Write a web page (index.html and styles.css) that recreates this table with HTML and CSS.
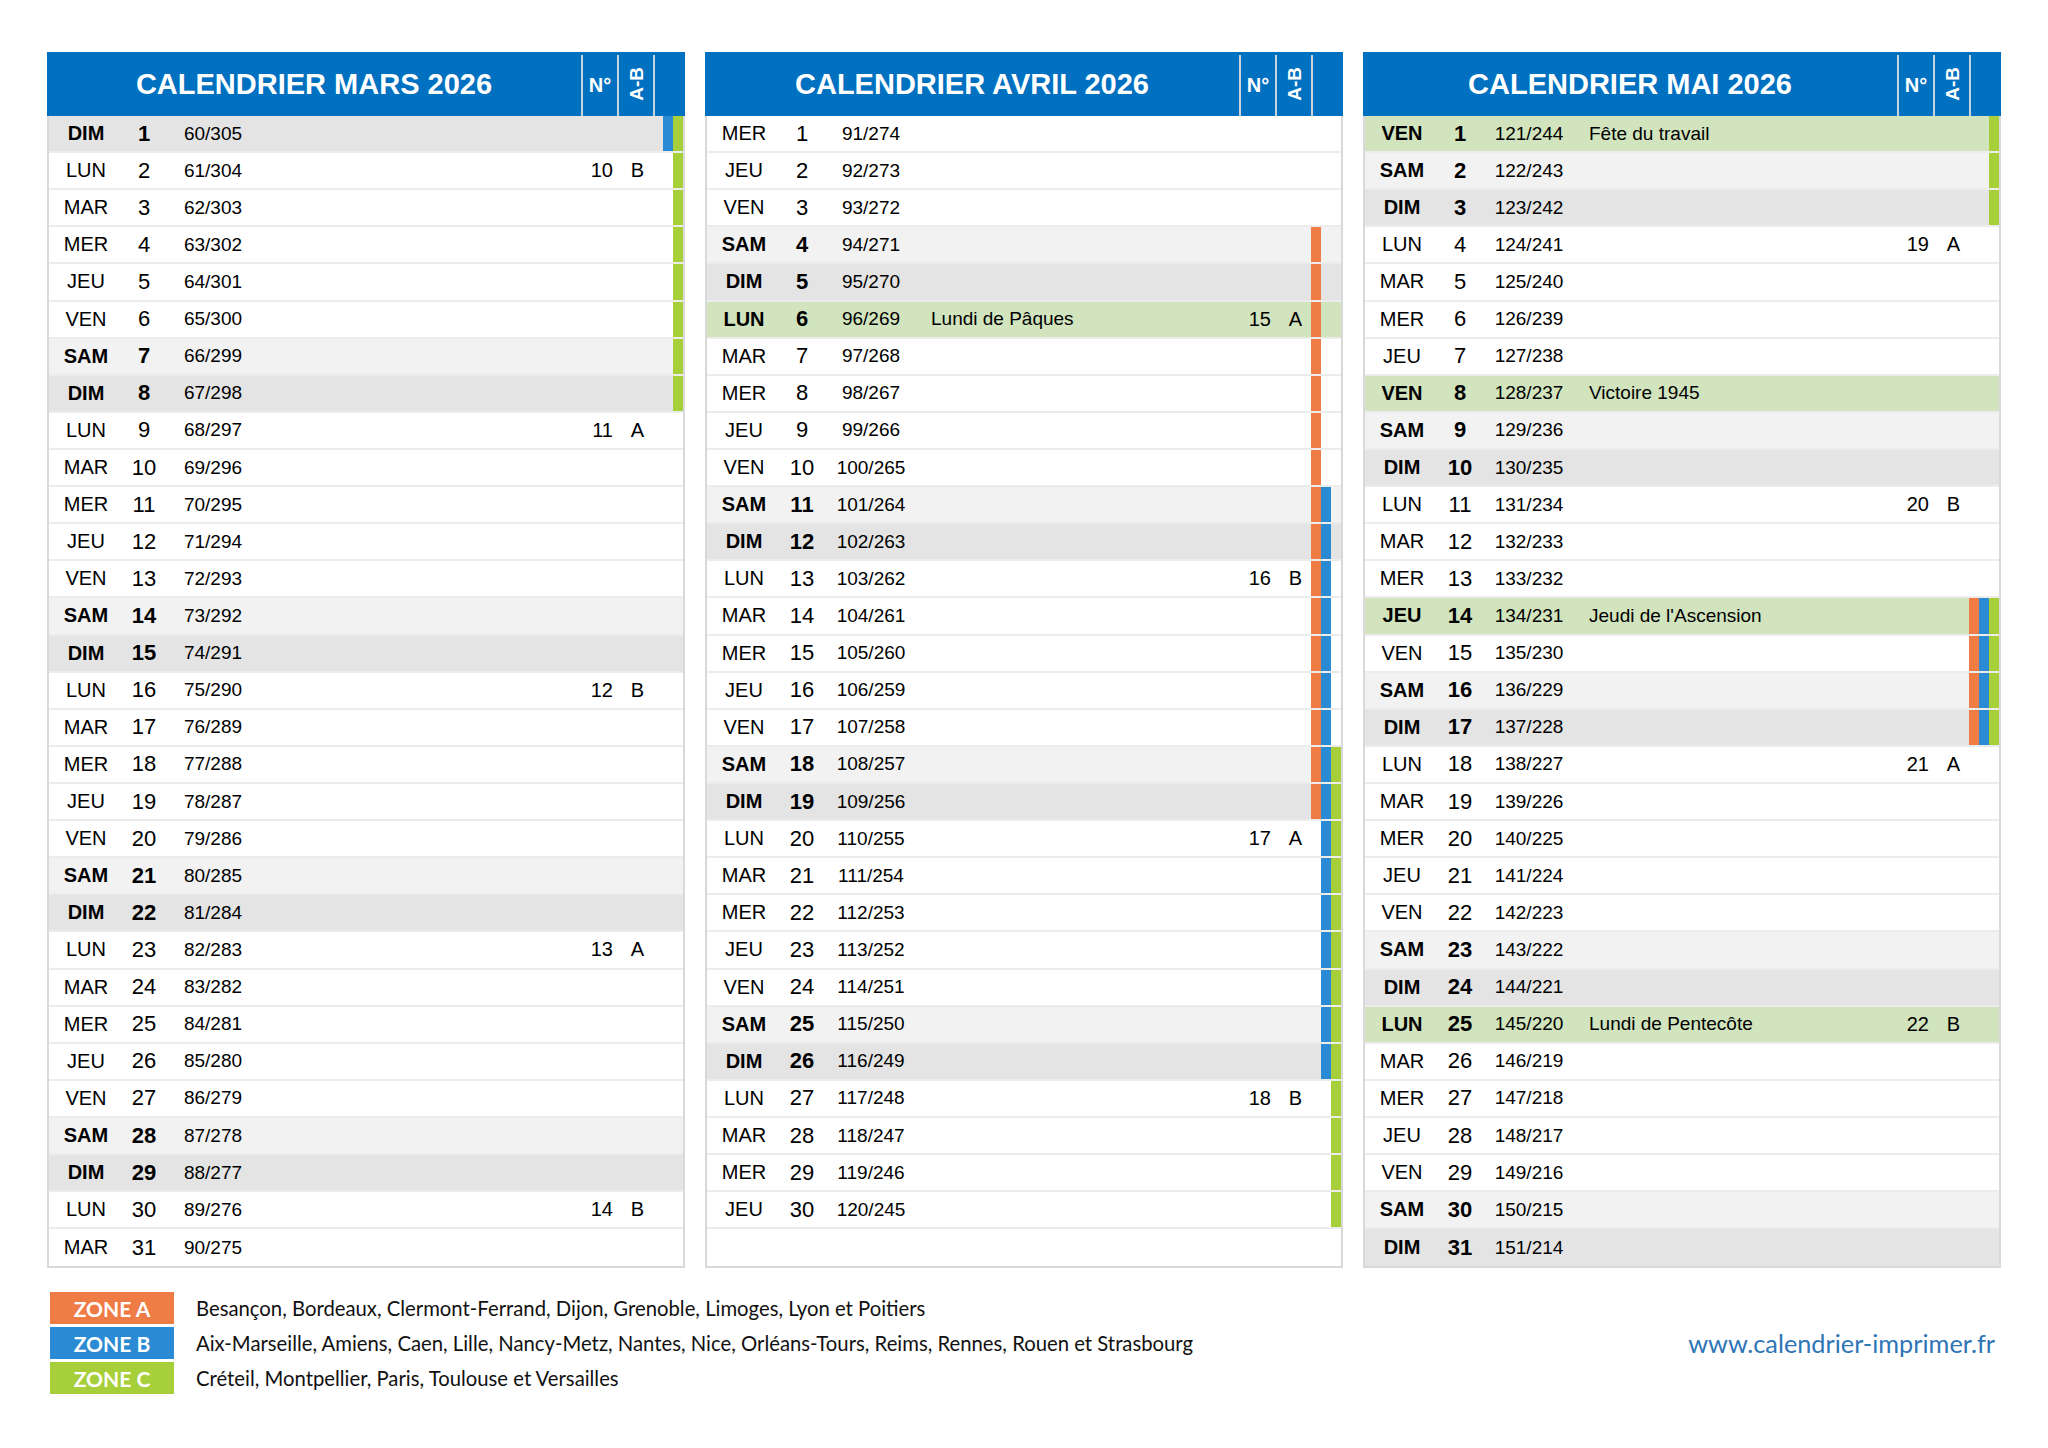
FILE: index.html
```html
<!DOCTYPE html>
<html lang="fr">
<head>
<meta charset="utf-8">
<title>Calendrier Mars Avril Mai 2026</title>
<link rel="stylesheet" href="styles.css">
</head>
<body>
<div class="months">
  <section class="month">
    <div class="head">
      <div class="title">CALENDRIER MARS 2026</div>
      <div class="hc">N°</div>
      <div class="hc"><span class="vert">A-B</span></div>
      <div class="hc"></div>
    </div>
    <div class="body">
      <div class="row sun"><span class="dn">DIM</span><span class="d">1</span><span class="doy">60/305</span><span class="z"><i class="b"></i><i class="c"></i></span></div>
      <div class="row"><span class="dn">LUN</span><span class="d">2</span><span class="doy">61/304</span><span class="wk">10</span><span class="ab">B</span><span class="z"><i class="c"></i></span></div>
      <div class="row"><span class="dn">MAR</span><span class="d">3</span><span class="doy">62/303</span><span class="z"><i class="c"></i></span></div>
      <div class="row"><span class="dn">MER</span><span class="d">4</span><span class="doy">63/302</span><span class="z"><i class="c"></i></span></div>
      <div class="row"><span class="dn">JEU</span><span class="d">5</span><span class="doy">64/301</span><span class="z"><i class="c"></i></span></div>
      <div class="row"><span class="dn">VEN</span><span class="d">6</span><span class="doy">65/300</span><span class="z"><i class="c"></i></span></div>
      <div class="row sat"><span class="dn">SAM</span><span class="d">7</span><span class="doy">66/299</span><span class="z"><i class="c"></i></span></div>
      <div class="row sun"><span class="dn">DIM</span><span class="d">8</span><span class="doy">67/298</span><span class="z"><i class="c"></i></span></div>
      <div class="row"><span class="dn">LUN</span><span class="d">9</span><span class="doy">68/297</span><span class="wk">11</span><span class="ab">A</span></div>
      <div class="row"><span class="dn">MAR</span><span class="d">10</span><span class="doy">69/296</span></div>
      <div class="row"><span class="dn">MER</span><span class="d">11</span><span class="doy">70/295</span></div>
      <div class="row"><span class="dn">JEU</span><span class="d">12</span><span class="doy">71/294</span></div>
      <div class="row"><span class="dn">VEN</span><span class="d">13</span><span class="doy">72/293</span></div>
      <div class="row sat"><span class="dn">SAM</span><span class="d">14</span><span class="doy">73/292</span></div>
      <div class="row sun"><span class="dn">DIM</span><span class="d">15</span><span class="doy">74/291</span></div>
      <div class="row"><span class="dn">LUN</span><span class="d">16</span><span class="doy">75/290</span><span class="wk">12</span><span class="ab">B</span></div>
      <div class="row"><span class="dn">MAR</span><span class="d">17</span><span class="doy">76/289</span></div>
      <div class="row"><span class="dn">MER</span><span class="d">18</span><span class="doy">77/288</span></div>
      <div class="row"><span class="dn">JEU</span><span class="d">19</span><span class="doy">78/287</span></div>
      <div class="row"><span class="dn">VEN</span><span class="d">20</span><span class="doy">79/286</span></div>
      <div class="row sat"><span class="dn">SAM</span><span class="d">21</span><span class="doy">80/285</span></div>
      <div class="row sun"><span class="dn">DIM</span><span class="d">22</span><span class="doy">81/284</span></div>
      <div class="row"><span class="dn">LUN</span><span class="d">23</span><span class="doy">82/283</span><span class="wk">13</span><span class="ab">A</span></div>
      <div class="row"><span class="dn">MAR</span><span class="d">24</span><span class="doy">83/282</span></div>
      <div class="row"><span class="dn">MER</span><span class="d">25</span><span class="doy">84/281</span></div>
      <div class="row"><span class="dn">JEU</span><span class="d">26</span><span class="doy">85/280</span></div>
      <div class="row"><span class="dn">VEN</span><span class="d">27</span><span class="doy">86/279</span></div>
      <div class="row sat"><span class="dn">SAM</span><span class="d">28</span><span class="doy">87/278</span></div>
      <div class="row sun"><span class="dn">DIM</span><span class="d">29</span><span class="doy">88/277</span></div>
      <div class="row"><span class="dn">LUN</span><span class="d">30</span><span class="doy">89/276</span><span class="wk">14</span><span class="ab">B</span></div>
      <div class="row"><span class="dn">MAR</span><span class="d">31</span><span class="doy">90/275</span></div>
    </div>
  </section>

  <section class="month">
    <div class="head">
      <div class="title">CALENDRIER AVRIL 2026</div>
      <div class="hc">N°</div>
      <div class="hc"><span class="vert">A-B</span></div>
      <div class="hc"></div>
    </div>
    <div class="body">
      <div class="row"><span class="dn">MER</span><span class="d">1</span><span class="doy">91/274</span></div>
      <div class="row"><span class="dn">JEU</span><span class="d">2</span><span class="doy">92/273</span></div>
      <div class="row"><span class="dn">VEN</span><span class="d">3</span><span class="doy">93/272</span></div>
      <div class="row sat"><span class="dn">SAM</span><span class="d">4</span><span class="doy">94/271</span><span class="z"><i class="a"></i></span></div>
      <div class="row sun"><span class="dn">DIM</span><span class="d">5</span><span class="doy">95/270</span><span class="z"><i class="a"></i></span></div>
      <div class="row hol"><span class="dn">LUN</span><span class="d">6</span><span class="doy">96/269</span><span class="ev">Lundi de Pâques</span><span class="wk">15</span><span class="ab">A</span><span class="z"><i class="a"></i></span></div>
      <div class="row"><span class="dn">MAR</span><span class="d">7</span><span class="doy">97/268</span><span class="z"><i class="a"></i></span></div>
      <div class="row"><span class="dn">MER</span><span class="d">8</span><span class="doy">98/267</span><span class="z"><i class="a"></i></span></div>
      <div class="row"><span class="dn">JEU</span><span class="d">9</span><span class="doy">99/266</span><span class="z"><i class="a"></i></span></div>
      <div class="row"><span class="dn">VEN</span><span class="d">10</span><span class="doy">100/265</span><span class="z"><i class="a"></i></span></div>
      <div class="row sat"><span class="dn">SAM</span><span class="d">11</span><span class="doy">101/264</span><span class="z"><i class="a"></i><i class="b"></i></span></div>
      <div class="row sun"><span class="dn">DIM</span><span class="d">12</span><span class="doy">102/263</span><span class="z"><i class="a"></i><i class="b"></i></span></div>
      <div class="row"><span class="dn">LUN</span><span class="d">13</span><span class="doy">103/262</span><span class="wk">16</span><span class="ab">B</span><span class="z"><i class="a"></i><i class="b"></i></span></div>
      <div class="row"><span class="dn">MAR</span><span class="d">14</span><span class="doy">104/261</span><span class="z"><i class="a"></i><i class="b"></i></span></div>
      <div class="row"><span class="dn">MER</span><span class="d">15</span><span class="doy">105/260</span><span class="z"><i class="a"></i><i class="b"></i></span></div>
      <div class="row"><span class="dn">JEU</span><span class="d">16</span><span class="doy">106/259</span><span class="z"><i class="a"></i><i class="b"></i></span></div>
      <div class="row"><span class="dn">VEN</span><span class="d">17</span><span class="doy">107/258</span><span class="z"><i class="a"></i><i class="b"></i></span></div>
      <div class="row sat"><span class="dn">SAM</span><span class="d">18</span><span class="doy">108/257</span><span class="z"><i class="a"></i><i class="b"></i><i class="c"></i></span></div>
      <div class="row sun"><span class="dn">DIM</span><span class="d">19</span><span class="doy">109/256</span><span class="z"><i class="a"></i><i class="b"></i><i class="c"></i></span></div>
      <div class="row"><span class="dn">LUN</span><span class="d">20</span><span class="doy">110/255</span><span class="wk">17</span><span class="ab">A</span><span class="z"><i class="b"></i><i class="c"></i></span></div>
      <div class="row"><span class="dn">MAR</span><span class="d">21</span><span class="doy">111/254</span><span class="z"><i class="b"></i><i class="c"></i></span></div>
      <div class="row"><span class="dn">MER</span><span class="d">22</span><span class="doy">112/253</span><span class="z"><i class="b"></i><i class="c"></i></span></div>
      <div class="row"><span class="dn">JEU</span><span class="d">23</span><span class="doy">113/252</span><span class="z"><i class="b"></i><i class="c"></i></span></div>
      <div class="row"><span class="dn">VEN</span><span class="d">24</span><span class="doy">114/251</span><span class="z"><i class="b"></i><i class="c"></i></span></div>
      <div class="row sat"><span class="dn">SAM</span><span class="d">25</span><span class="doy">115/250</span><span class="z"><i class="b"></i><i class="c"></i></span></div>
      <div class="row sun"><span class="dn">DIM</span><span class="d">26</span><span class="doy">116/249</span><span class="z"><i class="b"></i><i class="c"></i></span></div>
      <div class="row"><span class="dn">LUN</span><span class="d">27</span><span class="doy">117/248</span><span class="wk">18</span><span class="ab">B</span><span class="z"><i class="c"></i></span></div>
      <div class="row"><span class="dn">MAR</span><span class="d">28</span><span class="doy">118/247</span><span class="z"><i class="c"></i></span></div>
      <div class="row"><span class="dn">MER</span><span class="d">29</span><span class="doy">119/246</span><span class="z"><i class="c"></i></span></div>
      <div class="row"><span class="dn">JEU</span><span class="d">30</span><span class="doy">120/245</span><span class="z"><i class="c"></i></span></div>
      <div class="row empty"></div>
    </div>
  </section>

  <section class="month">
    <div class="head">
      <div class="title">CALENDRIER MAI 2026</div>
      <div class="hc">N°</div>
      <div class="hc"><span class="vert">A-B</span></div>
      <div class="hc"></div>
    </div>
    <div class="body">
      <div class="row hol"><span class="dn">VEN</span><span class="d">1</span><span class="doy">121/244</span><span class="ev">Fête du travail</span><span class="z"><i class="c"></i></span></div>
      <div class="row sat"><span class="dn">SAM</span><span class="d">2</span><span class="doy">122/243</span><span class="z"><i class="c"></i></span></div>
      <div class="row sun"><span class="dn">DIM</span><span class="d">3</span><span class="doy">123/242</span><span class="z"><i class="c"></i></span></div>
      <div class="row"><span class="dn">LUN</span><span class="d">4</span><span class="doy">124/241</span><span class="wk">19</span><span class="ab">A</span></div>
      <div class="row"><span class="dn">MAR</span><span class="d">5</span><span class="doy">125/240</span></div>
      <div class="row"><span class="dn">MER</span><span class="d">6</span><span class="doy">126/239</span></div>
      <div class="row"><span class="dn">JEU</span><span class="d">7</span><span class="doy">127/238</span></div>
      <div class="row hol"><span class="dn">VEN</span><span class="d">8</span><span class="doy">128/237</span><span class="ev">Victoire 1945</span></div>
      <div class="row sat"><span class="dn">SAM</span><span class="d">9</span><span class="doy">129/236</span></div>
      <div class="row sun"><span class="dn">DIM</span><span class="d">10</span><span class="doy">130/235</span></div>
      <div class="row"><span class="dn">LUN</span><span class="d">11</span><span class="doy">131/234</span><span class="wk">20</span><span class="ab">B</span></div>
      <div class="row"><span class="dn">MAR</span><span class="d">12</span><span class="doy">132/233</span></div>
      <div class="row"><span class="dn">MER</span><span class="d">13</span><span class="doy">133/232</span></div>
      <div class="row hol"><span class="dn">JEU</span><span class="d">14</span><span class="doy">134/231</span><span class="ev">Jeudi de l'Ascension</span><span class="z"><i class="a"></i><i class="b"></i><i class="c"></i></span></div>
      <div class="row"><span class="dn">VEN</span><span class="d">15</span><span class="doy">135/230</span><span class="z"><i class="a"></i><i class="b"></i><i class="c"></i></span></div>
      <div class="row sat"><span class="dn">SAM</span><span class="d">16</span><span class="doy">136/229</span><span class="z"><i class="a"></i><i class="b"></i><i class="c"></i></span></div>
      <div class="row sun"><span class="dn">DIM</span><span class="d">17</span><span class="doy">137/228</span><span class="z"><i class="a"></i><i class="b"></i><i class="c"></i></span></div>
      <div class="row"><span class="dn">LUN</span><span class="d">18</span><span class="doy">138/227</span><span class="wk">21</span><span class="ab">A</span></div>
      <div class="row"><span class="dn">MAR</span><span class="d">19</span><span class="doy">139/226</span></div>
      <div class="row"><span class="dn">MER</span><span class="d">20</span><span class="doy">140/225</span></div>
      <div class="row"><span class="dn">JEU</span><span class="d">21</span><span class="doy">141/224</span></div>
      <div class="row"><span class="dn">VEN</span><span class="d">22</span><span class="doy">142/223</span></div>
      <div class="row sat"><span class="dn">SAM</span><span class="d">23</span><span class="doy">143/222</span></div>
      <div class="row sun"><span class="dn">DIM</span><span class="d">24</span><span class="doy">144/221</span></div>
      <div class="row hol"><span class="dn">LUN</span><span class="d">25</span><span class="doy">145/220</span><span class="ev">Lundi de Pentecôte</span><span class="wk">22</span><span class="ab">B</span></div>
      <div class="row"><span class="dn">MAR</span><span class="d">26</span><span class="doy">146/219</span></div>
      <div class="row"><span class="dn">MER</span><span class="d">27</span><span class="doy">147/218</span></div>
      <div class="row"><span class="dn">JEU</span><span class="d">28</span><span class="doy">148/217</span></div>
      <div class="row"><span class="dn">VEN</span><span class="d">29</span><span class="doy">149/216</span></div>
      <div class="row sat"><span class="dn">SAM</span><span class="d">30</span><span class="doy">150/215</span></div>
      <div class="row sun"><span class="dn">DIM</span><span class="d">31</span><span class="doy">151/214</span></div>
    </div>
  </section>
</div>

<footer class="footer">
  <div class="zones">
    <div class="zrow"><span class="zbox za">ZONE A</span><span class="ztext">Besançon, Bordeaux, Clermont-Ferrand, Dijon, Grenoble, Limoges, Lyon et Poitiers</span></div>
    <div class="zrow"><span class="zbox zb">ZONE B</span><span class="ztext">Aix-Marseille, Amiens, Caen, Lille, Nancy-Metz, Nantes, Nice, Orléans-Tours, Reims, Rennes, Rouen et Strasbourg</span></div>
    <div class="zrow"><span class="zbox zc">ZONE C</span><span class="ztext">Créteil, Montpellier, Paris, Toulouse et Versailles</span></div>
  </div>
  <div class="url">www.calendrier-imprimer.fr</div>
</footer>
</body>
</html>
```

FILE: styles.css
```css
html, body {
  margin: 0;
  background: #ffffff;
}

body {
  width: 2048px;
  height: 1448px;
  box-sizing: border-box;
  padding: 52px 0 0 47px;
  font-family: "Liberation Sans", Arial, sans-serif;
  color: #000;
  overflow: hidden;
}

.months {
  display: grid;
  grid-template-columns: repeat(3, 638px);
  column-gap: 20px;
}

/* ---------- header ---------- */
.head {
  height: 64px;
  background: #0070c0;
  display: grid;
  grid-template-columns: 534px 36px 36px 1fr;
  color: #fff;
  font-weight: bold;
}

.title {
  font-size: 29px;
  display: flex;
  align-items: center;
  justify-content: center;
  padding-top: 1px;
}

.hc {
  margin-top: 3px;
  border-left: 2px solid #c8d3dc;
  display: flex;
  align-items: center;
  justify-content: center;
  font-size: 20px;
}

.vert {
  writing-mode: vertical-rl;
  transform: rotate(180deg);
  font-size: 19px;
  line-height: 1;
  margin-bottom: 4px;
}

/* ---------- body ---------- */
.body {
  border: 2px solid #d9d9d9;
  border-top: 0;
}

.row {
  display: grid;
  grid-template-columns: 74px 42px 96px 1fr 36px 36px 30px;
  height: 37.12px;
  box-sizing: border-box;
  border-bottom: 2px solid #ececec;
  align-items: center;
  background: #fff;
}

.row:last-child {
  border-bottom: 0;
}

.row.sat { background: #f2f2f2; }
.row.sun { background: #e4e4e4; }
.row.hol { background: #d1e4be; }

.dn {
  grid-column: 1;
  grid-row: 1;
  text-align: center;
  font-size: 20px;
}

.d {
  grid-column: 2;
  grid-row: 1;
  text-align: center;
  font-size: 22px;
}

.sat .dn, .sat .d,
.sun .dn, .sun .d,
.hol .dn, .hol .d {
  font-weight: bold;
}

.doy {
  grid-column: 3;
  grid-row: 1;
  text-align: center;
  font-size: 19px;
}

.ev {
  grid-column: 4;
  grid-row: 1;
  padding-left: 12px;
  font-size: 19px;
}

.wk {
  grid-column: 5;
  grid-row: 1;
  text-align: right;
  padding-right: 4px;
  font-size: 20px;
}

.ab {
  grid-column: 6;
  grid-row: 1;
  text-align: center;
  padding-left: 5px;
  font-size: 20px;
}

.z {
  grid-column: 7;
  grid-row: 1;
  align-self: stretch;
  display: grid;
  grid-template-columns: repeat(3, 10px);
}

.z i {
  grid-row: 1;
}

.z .a { grid-column: 1; background: #ef7b45; }
.z .b { grid-column: 2; background: #2a8ad3; }
.z .c { grid-column: 3; background: #a7cf3a; }

/* ---------- footer ---------- */
.footer {
  width: 1954px;
  box-sizing: border-box;
  margin-top: 24px;
  padding: 0 6px 0 3px;
  display: flex;
  align-items: center;
  justify-content: space-between;
}

.zones {
  display: flex;
  flex-direction: column;
  gap: 3px;
}

.zrow {
  display: flex;
  align-items: center;
  gap: 22px;
}

.zbox {
  width: 124px;
  height: 32px;
  display: flex;
  align-items: center;
  justify-content: center;
  color: #fff;
  font-family: Lato, "Open Sans", sans-serif;
  font-weight: bold;
  font-size: 21px;
}

.za { background: #ef7b45; }
.zb { background: #2a8ad3; }
.zc { background: #a7cf3a; }

.ztext {
  font-family: Lato, "Open Sans", sans-serif;
  font-size: 20.3px;
  color: #111;
}

.url {
  font-family: Lato, "Open Sans", sans-serif;
  font-size: 25.3px;
  color: #2e75b6;
}
```
